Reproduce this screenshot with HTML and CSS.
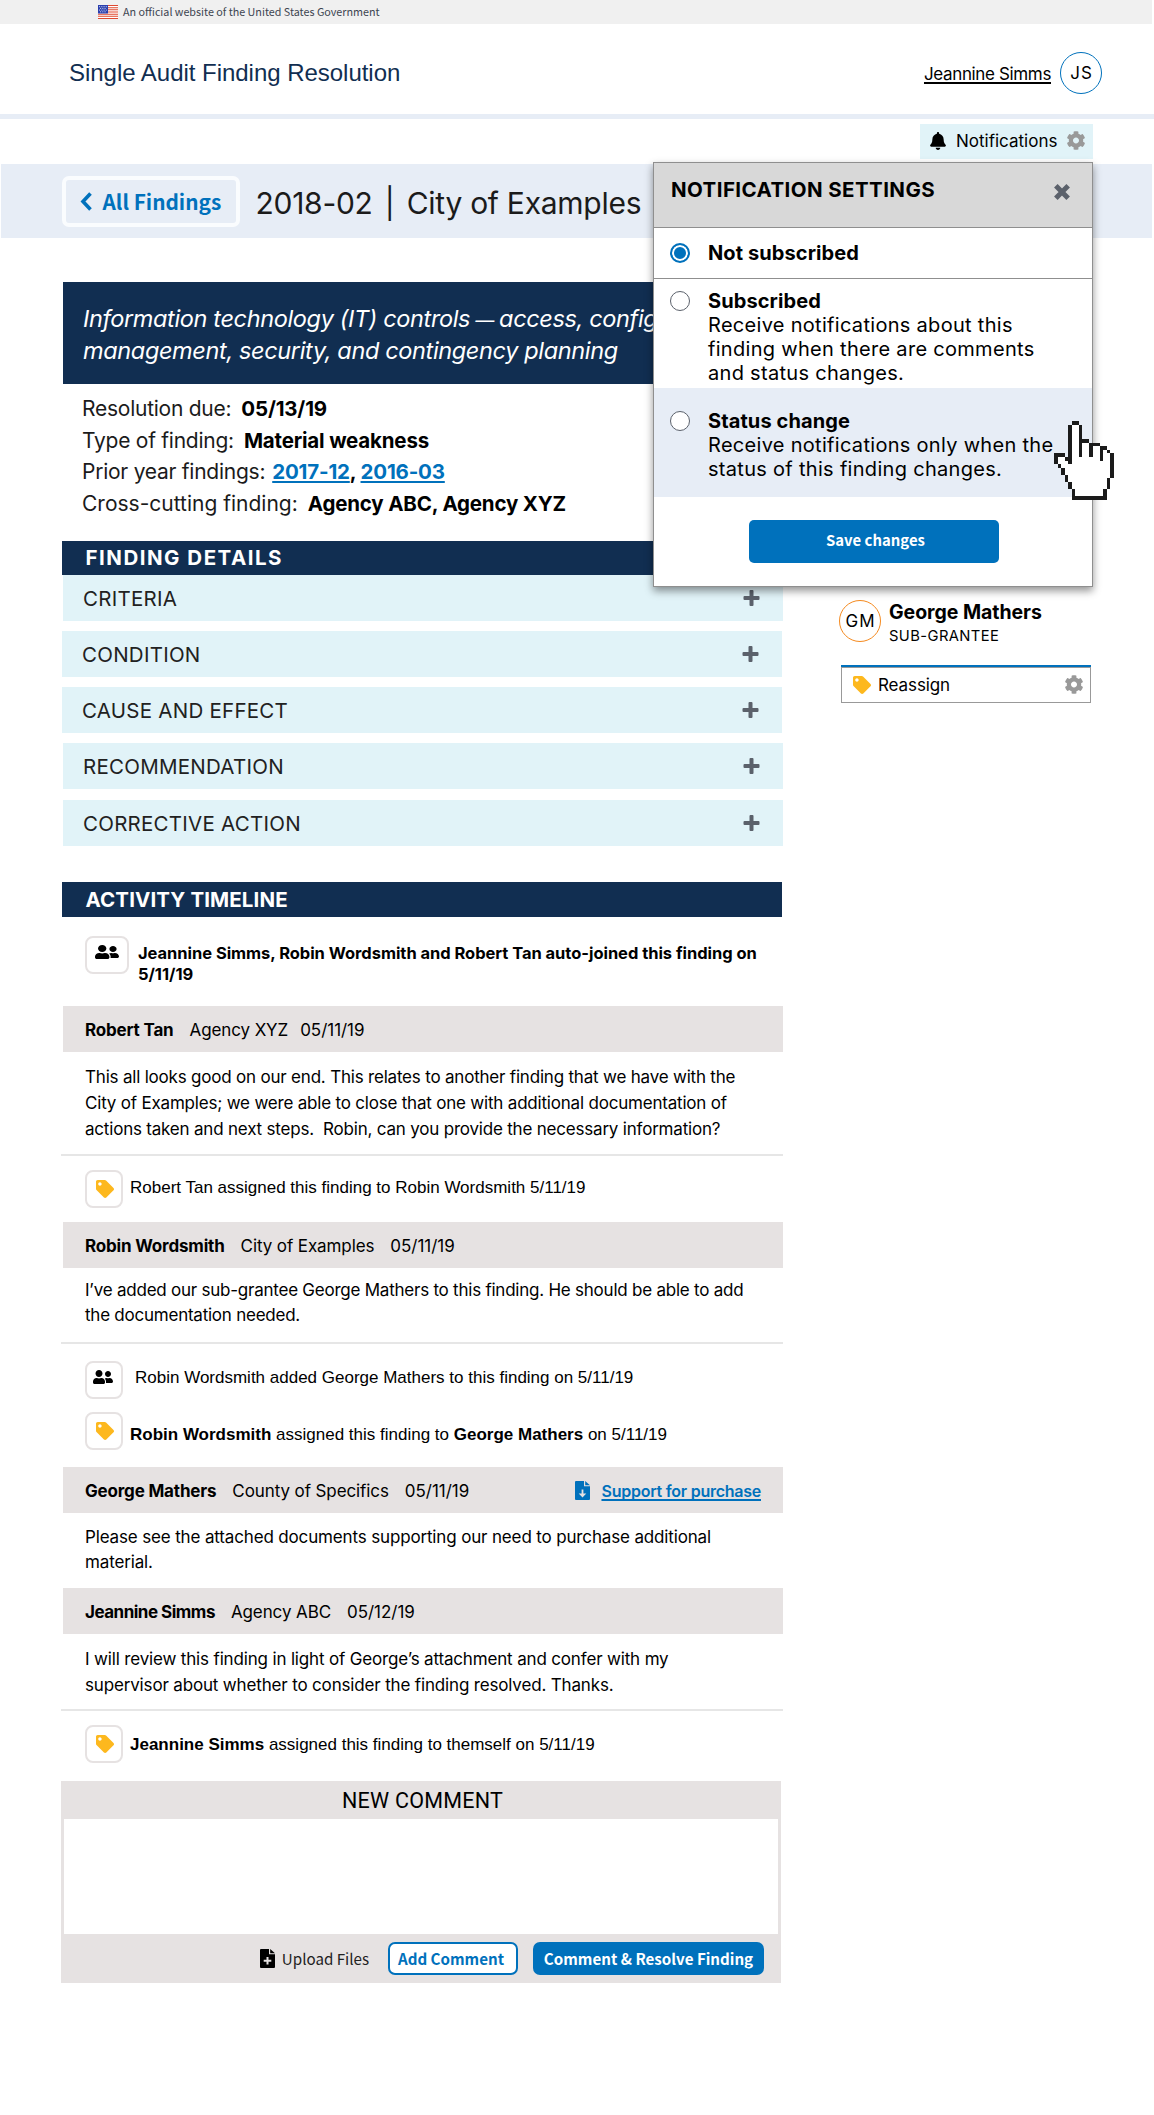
FILE: index.html
```html
<!DOCTYPE html>
<html lang="en">
<head>
<meta charset="utf-8">
<title>Single Audit Finding Resolution</title>
<link rel="stylesheet" href="styles.css">
</head>
<body>
<svg class="sprite" aria-hidden="true">
  <symbol id="gear" viewBox="16 8 480 496"><path d="M487.4 315.7l-42.6-24.6c4.3-23.2 4.3-47 0-70.2l42.6-24.6c4.9-2.8 7.1-8.6 5.5-14-11.1-35.6-30-67.8-54.7-94.6-3.8-4.1-10-5.1-14.8-2.3L380.8 110c-17.9-15.4-38.5-27.3-60.8-35.1V25.8c0-5.6-3.9-10.5-9.4-11.7-36.7-8.2-74.3-7.8-109.2 0-5.5 1.2-9.4 6.1-9.4 11.7V75c-22.2 7.9-42.8 19.8-60.8 35.1L88.7 85.5c-4.9-2.8-11-1.9-14.8 2.3-24.7 26.7-43.6 58.9-54.7 94.6-1.7 5.4.6 11.2 5.5 14L67.3 221c-4.3 23.2-4.3 47 0 70.2l-42.6 24.6c-4.9 2.8-7.1 8.6-5.5 14 11.1 35.6 30 67.8 54.7 94.6 3.8 4.1 10 5.1 14.8 2.3l42.6-24.6c17.9 15.4 38.5 27.3 60.8 35.1v49.2c0 5.6 3.9 10.5 9.4 11.7 36.7 8.2 74.3 7.8 109.2 0 5.5-1.2 9.4-6.1 9.4-11.7v-49.2c22.2-7.9 42.8-19.8 60.8-35.1l42.6 24.6c4.9 2.8 11 1.9 14.8-2.3 24.7-26.7 43.6-58.9 54.7-94.6 1.5-5.5-.7-11.3-5.6-14.1zM256 336c-44.1 0-80-35.9-80-80s35.9-80 80-80 80 35.9 80 80-35.9 80-80 80z"/></symbol>
  <symbol id="bell" viewBox="0 0 448 512"><path d="M224 512c35.32 0 63.97-28.65 63.97-64H160.03c0 35.35 28.65 64 63.97 64zm215.39-149.71c-19.32-20.76-55.47-51.99-55.47-154.29 0-77.7-54.48-139.9-127.94-155.16V32c0-17.67-14.32-32-31.98-32s-31.98 14.33-31.98 32v20.84C118.56 68.1 64.08 130.3 64.08 208c0 102.3-36.15 133.53-55.47 154.29-6 6.45-8.66 14.16-8.61 21.71.11 16.4 12.98 32 32.1 32h383.8c19.12 0 32-15.6 32.1-32 .05-7.55-2.61-15.27-8.61-21.71z"/></symbol>
  <symbol id="tag" viewBox="0 0 512 512"><path d="M0 252.118V48C0 21.49 21.49 0 48 0h204.118a48 48 0 0 1 33.941 14.059l211.882 211.882c18.745 18.745 18.745 49.137 0 67.882L293.823 497.941c-18.745 18.745-49.137 18.745-67.882 0L14.059 286.059A48 48 0 0 1 0 252.118zM112 64c-26.51 0-48 21.49-48 48s21.49 48 48 48 48-21.49 48-48-21.49-48-48-48z"/></symbol>
  <symbol id="people" viewBox="0 32 640 448" preserveAspectRatio="none"><path d="M192 256c61.9 0 112-50.1 112-112S253.9 32 192 32 80 82.1 80 144s50.1 112 112 112zm76.8 32h-8.3c-20.8 10-43.9 16-68.5 16s-47.6-6-68.5-16h-8.3C51.6 288 0 339.6 0 403.2V432c0 26.5 21.5 48 48 48h288c26.5 0 48-21.5 48-48v-28.8c0-63.6-51.6-115.2-115.2-115.2zM480 256c53 0 96-43 96-96s-43-96-96-96-96 43-96 96 43 96 96 96zm48 32h-3.8c-13.9 4.8-28.6 8-44.2 8s-30.3-3.2-44.2-8H432c-20.4 0-39.2 5.9-55.7 15.4 24.4 26.3 39.7 61.2 39.7 99.8v38.4c0 2.2-.5 4.3-.6 6.4H592c26.5 0 48-21.5 48-48 0-61.9-50.1-112-112-112z"/></symbol>
  <symbol id="plus" viewBox="0 0 16 16"><path d="M6 1a1 1 0 0 1 1-1h2a1 1 0 0 1 1 1v5h5a1 1 0 0 1 1 1v2a1 1 0 0 1-1 1h-5v5a1 1 0 0 1-1 1H7a1 1 0 0 1-1-1v-5H1a1 1 0 0 1-1-1V7a1 1 0 0 1 1-1h5z"/></symbol>
  <symbol id="file-down" viewBox="0 0 15 19"><path fill-rule="evenodd" d="M1 0h8v5.200h6V18a1 1 0 0 1-1 1H1a1 1 0 0 1-1-1V1a1 1 0 0 1 1-1zM6.600 8.500v4H3.700l3.800 4 3.800-4H8.400v-4z"/><path d="M10.200 0l4.800 4.200h-4.800z"/></symbol>
  <symbol id="file-plus" viewBox="0 0 15 19"><path fill-rule="evenodd" d="M1 0h8v5.200h6V18a1 1 0 0 1-1 1H1a1 1 0 0 1-1-1V1a1 1 0 0 1 1-1zM6.500 8v2.800H3.700v2h2.800v2.800h2v-2.800h2.800v-2H8.500V8z"/><path d="M10.200 0l4.800 4.200h-4.800z"/></symbol>
</svg>

<div class="gov-banner">
  <svg class="flag" viewBox="0 0 20 14"><path fill="#fff" d="M0 0h20v14H0z"/><path fill="#e0492f" d="M0 0h20v1H0zM0 2.170h20v1H0zM0 4.330h20v1H0zM0 6.500h20v1H0zM0 8.670h20v1H0zM0 10.830h20v1H0zM0 13h20v1H0z"/><path fill="#2a3fae" d="M0 0h10v8.500H0z"/><path stroke="#fff" stroke-width=".9" stroke-dasharray=".9 1.300" d="M1.200 1.700h8M2.200 3.400h6.500M1.200 5.100h8M2.200 6.800h6.500"/></svg>
  <span>An official website of the United States Government</span>
</div>

<header class="site-header">
  <h1>Single Audit Finding Resolution</h1>
  <div class="user"><a href="#">Jeannine Simms</a><span class="avatar">JS</span></div>
</header>

<div class="toolbar">
  <div class="notif-anchor">
    <button class="notif-button"><svg class="i-bell"><use href="#bell"/></svg><span>Notifications</span><svg class="i-gear"><use href="#gear"/></svg></button>
    <section class="popover">
      <div class="popover-head"><h2>NOTIFICATION SETTINGS</h2>
        <svg class="i-close" viewBox="0 0 16 16"><path stroke="#5b616b" stroke-width="5" stroke-linecap="square" d="M3.600 3.600l8.800 8.800M12.400 3.600l-8.800 8.800"/></svg></div>
      <label class="option option-none"><span class="radio checked"></span><span><b>Not subscribed</b></span></label>
      <label class="option option-all"><span class="radio"></span><span><b>Subscribed</b><br>Receive notifications about this<br>finding when there are comments<br>and status changes.</span></label>
      <label class="option option-status"><span class="radio"></span><span><b>Status change</b><br>Receive notifications only when the<br>status of this finding changes.</span></label>
      <button class="save">Save changes</button>
      <svg class="cursor" viewBox="0 0 17 22" preserveAspectRatio="none" shape-rendering="crispEdges"><path fill="#fff" d="M5 1h2v4h3v1h3v1h2v1h1v8h-1v3h-1v2H6v-2H5v-2H4v-2H3v-2H2v-1H1v-2h2v1h2z"/><path fill="#1b1b1b" d="M5 0h2v1H5zM4 1h1v11H4v-1H3v-1h1zM7 1h1v4h2v1H8v4H7zM10 6h3v1h-2v3h-1zM13 7h2v1h-1v3h-1zM15 8h1v1h-1zM16 9h1v7h-1zM15 16h1v3h-1zM14 19h1v3H5v-3h1v2h8zM4 17h1v2H4zM3 15h1v2H3zM2 13h1v2H2zM1 12h1v1H1zM0 9h3v1H1v2H0z"/></svg>
    </section>
  </div>
</div>

<div class="title-band">
  <a class="back" href="#"><svg viewBox="0 0 12 19"><path fill="none" stroke="#0071bc" stroke-width="3.600" d="M10.500 1.500L3 9.500l7.500 8"/></svg>All Findings</a>
  <h2><span>2018-02</span><em>|</em><span>City of Examples</span></h2>
</div>

<div class="page">
  <main>
    <div class="summary">Information technology (IT) controls<span class="dash">—</span>access, configuration<br>management, security, and contingency planning</div>
    <dl class="facts">
      <div><dt>Resolution due:</dt><dd>05/13/19</dd></div>
      <div><dt>Type of finding:</dt><dd>Material weakness</dd></div>
      <div><dt>Prior year findings:</dt><dd class="near"><a href="#">2017-12</a>, <a href="#">2016-03</a></dd></div>
      <div><dt class="cross">Cross-cutting finding:</dt><dd>Agency ABC, Agency XYZ</dd></div>
    </dl>

    <h3 class="section-bar details-bar">FINDING DETAILS</h3>
    <ul class="accordion">
      <li>CRITERIA<svg><use href="#plus"/></svg></li>
      <li class="shift">CONDITION<svg><use href="#plus"/></svg></li>
      <li class="shift">CAUSE AND EFFECT<svg><use href="#plus"/></svg></li>
      <li>RECOMMENDATION<svg><use href="#plus"/></svg></li>
      <li>CORRECTIVE ACTION<svg><use href="#plus"/></svg></li>
    </ul>

    <h3 class="section-bar timeline-bar">ACTIVITY TIMELINE</h3>
    <div class="joined"><span class="chip wide"><svg class="i-people"><use href="#people"/></svg></span><p>Jeannine Simms, Robin Wordsmith and Robert Tan auto-joined this finding on<br>5/11/19</p></div>

    <article>
      <header><b>Robert Tan</b><span>Agency XYZ</span><time class="tight">05/11/19</time></header>
      <p class="c1">This all looks good on our end. This relates to another finding that we have with the<br>City of Examples; we were able to close that one with additional documentation of<br>actions taken and next steps.&nbsp; Robin, can you provide the necessary information?</p>
    </article>
    <div class="event e1"><span class="chip"><svg class="i-tag"><use href="#tag"/></svg></span><p>Robert Tan assigned this finding to Robin Wordsmith 5/11/19</p></div>

    <article>
      <header><b>Robin Wordsmith</b><span>City of Examples</span><time>05/11/19</time></header>
      <p class="c2">I’ve added our sub-grantee George Mathers to this finding. He should be able to add<br>the documentation needed.</p>
    </article>
    <div class="event e2"><span class="chip"><svg class="i-people small"><use href="#people"/></svg></span><p>Robin Wordsmith added George Mathers to this finding on 5/11/19</p></div>
    <div class="event e3"><span class="chip"><svg class="i-tag"><use href="#tag"/></svg></span><p><b>Robin Wordsmith</b> assigned this finding to <b>George Mathers</b> on 5/11/19</p></div>

    <article>
      <header><b>George Mathers</b><span>County of Specifics</span><time>05/11/19</time><a href="#"><svg class="i-file"><use href="#file-down"/></svg><u>Support for purchase</u></a></header>
      <p class="c3">Please see the attached documents supporting our need to purchase additional<br>material.</p>
    </article>
    <article>
      <header><b class="snug">Jeannine Simms</b><span>Agency ABC</span><time>05/12/19</time></header>
      <p class="c4">I will review this finding in light of George’s attachment and confer with my<br>supervisor about whether to consider the finding resolved. Thanks.</p>
    </article>
    <div class="event e4"><span class="chip"><svg class="i-tag"><use href="#tag"/></svg></span><p><b>Jeannine Simms</b> assigned this finding to themself on 5/11/19</p></div>

    <form class="new-comment">
      <h3>NEW COMMENT</h3>
      <div class="field"></div>
      <div class="actions">
        <a class="upload" href="#"><svg class="i-file"><use href="#file-plus"/></svg>Upload Files</a>
        <button type="button" class="outline">Add Comment</button>
        <button type="button" class="solid">Comment &amp; Resolve Finding</button>
      </div>
    </form>
  </main>

  <aside>
    <div class="person"><span class="avatar orange">GM</span><div><b>George Mathers</b><small>SUB-GRANTEE</small></div></div>
    <button class="reassign"><svg class="i-tag"><use href="#tag"/></svg><span>Reassign</span><svg class="i-gear"><use href="#gear"/></svg></button>
  </aside>
</div>
</body>
</html>
```
FILE: styles.css
```css
* { box-sizing: border-box; }
body { margin: 0; width: 1154px; min-height: 2115px; background: #fff; color: #000; font-family: Inter, "Liberation Sans", sans-serif; font-size: 17px; }
h1, h2, h3, p, dl, dd, ul { margin: 0; padding: 0; font-weight: 400; }
button { border: 0; padding: 0; font: inherit; color: inherit; }
svg { display: block; flex: none; }
em { font-style: normal; }
.sprite { position: absolute; width: 0; height: 0; }

.gov-banner { display: flex; align-items: center; gap: 5px; width: 1152px; height: 24px; padding-left: 98px; background: #f0f0f0; color: #3d4551; font: 10.750px/24px "Noto Sans CJK JP", sans-serif; white-space: nowrap; }
.flag { width: 20px; height: 14px; }

.site-header { display: flex; justify-content: space-between; align-items: center; height: 94.500px; padding: 8px 52px 0 69px; border-bottom: 5px solid #e7edf6; }
.site-header h1 { color: #112e51; font: 24px/30px "Liberation Sans", sans-serif; letter-spacing: -.03px; }
.user { display: flex; align-items: center; gap: 9px; }
.user a { padding-top: 3px; color: #000; letter-spacing: -.36px; text-decoration-thickness: 2px; text-underline-offset: 2px; text-decoration-skip-ink: none; }
.avatar { display: flex; align-items: center; justify-content: center; width: 42px; height: 42px; padding-left: 1px; border: 1px solid #0071bc; border-radius: 50%; letter-spacing: 1px; }
.avatar.orange { border-color: #f58a1f; }

.toolbar { display: flex; justify-content: flex-end; height: 45.500px; padding: 5.500px 61px 0 0; }
.notif-anchor { position: relative; }
.notif-button { display: flex; align-items: center; width: 173px; height: 35px; padding: 0 8px 2px 10px; background: #e1f3f8; }
.notif-button span { margin-left: 10px; }
.i-bell { width: 16px; height: 18px; }
.i-gear { width: 18px; height: 19px; margin-left: auto; fill: #999; }

.popover { position: absolute; z-index: 2; top: 38px; right: 0; width: 440px; height: 425px; background: #fff; border: 1px solid #8f8f8f; box-shadow: 0 4px 8px rgba(0,0,0,.42); font-size: 20px; line-height: 24px; }
.popover-head { display: flex; justify-content: space-between; height: 65px; padding: 15px 22px 0 17px; background: #d8d8d8; border-bottom: 1px solid #8f8f8f; }
.popover-head h2 { font-size: 20.500px; letter-spacing: .42px; font-weight: 700; white-space: nowrap; }
.i-close { width: 16px; height: 16px; margin-top: 6px; }
.option { display: flex; gap: 18px; padding-left: 16px; letter-spacing: .3px; white-space: nowrap; }
.option b { letter-spacing: .1px; }
.option-none { height: 51px; padding-top: 13px; border-bottom: 1px solid #8f8f8f; }
.option-all { height: 109px; padding-top: 10px; }
.option-status { height: 109px; padding-top: 21px; background: #e7edf6; }
.radio { flex: none; width: 20px; height: 20px; margin-top: 2px; border: 1px solid #5b616b; border-radius: 50%; background: #fff; }
.radio.checked { border: 2px solid #0071bc; background: #0071bc; box-shadow: inset 0 0 0 2px #fff; }
.save { display: block; width: 250px; height: 43px; margin: 23px 0 0 95px; padding: 0 0 3px 3px; border-radius: 5px; background: #0071bc; color: #fff; font: 700 14.900px/38px "Noto Sans CJK JP", sans-serif; }
.cursor { position: absolute; left: 400px; top: 258px; width: 60px; height: 79px; }

.title-band { display: flex; align-items: center; width: 1151px; height: 74px; margin-left: 1px; padding-left: 61px; background: #e7edf6; }
.back { display: flex; align-items: center; width: 178px; height: 51px; padding-left: 14px; border: 4px solid #fafcfe; border-radius: 7px; color: #0071bc; text-decoration: none; font: 700 20.800px/40px "Noto Sans CJK JP", sans-serif; }
.back svg { width: 12px; height: 19px; margin-right: 10.500px; }
.title-band h2 { display: flex; padding-top: 3px; margin-left: 15.500px; color: #1b1b1b; font-weight: 400; font-size: 30px; letter-spacing: -.27px; line-height: 40px; white-space: nowrap; }
.title-band em { width: 34px; text-align: center; }

.page { display: flex; padding: 44px 0 0 61px; }
main { width: 722px; }
.summary { width: 720px; height: 102px; margin-left: 2px; padding: 21px 0 0 20px; background: #112e51; color: #fff; font-size: 23.500px; letter-spacing: -.36px; line-height: 32px; font-style: italic; white-space: nowrap; }
.dash { display: inline-block; width: 29px; text-align: center; font-size: 19px; line-height: 19px; }
.facts { height: 157px; padding: 9px 0 0 21px; font-size: 21px; line-height: 31.700px; white-space: nowrap; }
.facts div { display: flex; }
.facts dt { color: #1b1b1b; font-weight: 400; letter-spacing: -.25px; }
.facts dt.cross { letter-spacing: 0; }
.facts dd { margin-left: 10px; font-size: 20.500px; font-weight: 700; letter-spacing: -.18px; }
.facts .near { margin-left: 7px; }
.facts a, article a { color: #0071bc; text-decoration-thickness: 2px; text-underline-offset: 2px; text-decoration-skip-ink: none; }
.section-bar { width: 720px; margin-left: 1px; padding-left: 23.500px; background: #112e51; color: #fff; font-size: 20.500px; font-weight: 700; white-space: nowrap; }
.details-bar { height: 34px; line-height: 34px; letter-spacing: 1.500px; }
.timeline-bar { height: 35px; line-height: 35px; margin-top: 36px; letter-spacing: .12px; }
.accordion { display: flex; flex-direction: column; gap: 10px; list-style: none; }
.accordion li { display: flex; align-items: center; justify-content: space-between; width: 720px; height: 46px; margin-left: 2px; padding: 0 23px 0 20px; background: #e1f3f8; color: #212121; font-size: 20.500px; font-weight: 400; letter-spacing: .25px; }
.accordion li.shift { margin-left: 1px; }
.accordion li:last-child { margin-top: 1px; }
.accordion svg { width: 17px; height: 16px; fill: #5b616b; margin-top: -1px; }

.chip { flex: none; display: flex; align-items: center; justify-content: center; width: 38px; height: 38px; border: 2px solid #e6e2e2; border-radius: 8px; }
.chip.wide { width: 44px; }
.i-people { width: 24px; height: 14px; margin: -6px 0 0 -1px; }
.i-people.small { width: 20px; margin-left: -2px; }
.i-tag { width: 18px; height: 18px; fill: #fdb81e; }
.chip .i-tag { margin-left: 2px; }
.joined { display: flex; gap: 9px; height: 89px; padding: 19px 0 0 24px; line-height: 21px; white-space: nowrap; }
.joined p { padding-top: 7px; font-weight: 700; font-size: 16.500px; letter-spacing: -.04px; }
article header { display: flex; align-items: center; gap: 16px; width: 720px; height: 46px; margin-left: 2px; padding: 1px 22px 0; background: #e6e2e2; letter-spacing: -.1px; white-space: nowrap; }
article header b { letter-spacing: -.18px; }
article header b.snug { letter-spacing: -.5px; }
article header time { letter-spacing: -.03px; }
article time.tight { margin-left: -4px; }
article header a { display: flex; align-items: center; gap: 11px; margin-left: auto; font-weight: 600; font-size: 16px; letter-spacing: -.25px; text-decoration: none; }
article u { text-decoration-thickness: 2px; text-underline-offset: 2px; text-decoration-skip-ink: none; }
.i-file { width: 15px; height: 19px; fill: currentColor; }
article p { padding-left: 24px; line-height: 26px; letter-spacing: -.2px; white-space: nowrap; }
.c1, .c2, .c4 { border-bottom: 2px solid #e6e6e6; }
.c1 { height: 104px; padding-top: 12px; }
.c2 { height: 76px; padding-top: 10px; line-height: 25px; letter-spacing: -.235px; }
.c3 { height: 75px; padding-top: 12px; line-height: 25px; letter-spacing: -.15px; }
.c4 { height: 77px; padding-top: 12px; letter-spacing: -.16px; }
.event { display: flex; gap: 7px; padding-left: 24px; font: 17px/38px "Liberation Sans", sans-serif; white-space: nowrap; }
.e1 { height: 66px; padding-top: 14px; }
.e1 p { margin-top: -1px; }
.e2 { height: 68px; padding-top: 17px; gap: 12px; }
.e2 p { margin-top: -2px; }
.e3 { height: 55px; }
.e3 p { margin-top: 4px; }
.e4 { height: 70px; padding-top: 14px; }
.e4 p { margin-top: 1px; }

.new-comment { width: 720px; height: 202px; padding: 0 3px; background: #e6e2e2; }
.new-comment h3 { height: 38px; padding-left: 3px; text-align: center; font: 21.500px/40px Roboto, sans-serif; letter-spacing: .25px; }
.field { height: 115px; background: #fff; }
.actions { display: flex; align-items: center; justify-content: flex-end; padding: 8px 14px 0 0; font-family: "Noto Sans CJK JP", sans-serif; font-size: 15.150px; white-space: nowrap; }
.upload { display: flex; align-items: center; gap: 7px; margin: -1px 19px 0 0; color: #212121; text-decoration: none; line-height: 30px; }
.upload svg { fill: #000; }
.outline, .solid { height: 33px; padding-bottom: 1px; border-radius: 7px; font-weight: 700; line-height: 27px; }
.outline { width: 130px; margin-right: 15px; padding-right: 4px; border: 2px solid #0071bc; background: #fff; color: #0071bc; }
.solid { width: 231px; background: #0071bc; color: #fff; }

aside { padding: 318px 0 0 56px; }
.person { display: flex; gap: 8px; height: 60px; white-space: nowrap; }
.person b { display: block; font-size: 19.500px; line-height: 24px; letter-spacing: -.05px; }
.person small { display: block; font-size: 14.750px; line-height: 24px; letter-spacing: .4px; }
.reassign { display: flex; align-items: center; width: 250px; height: 36px; margin: 7px 0 0 2px; padding: 0 7px 1px 11px; border: 1px solid #999; box-shadow: 0 -2px #0071bc; background: #fff; }
.reassign span { margin-left: 7px; letter-spacing: -.1px; }
```
